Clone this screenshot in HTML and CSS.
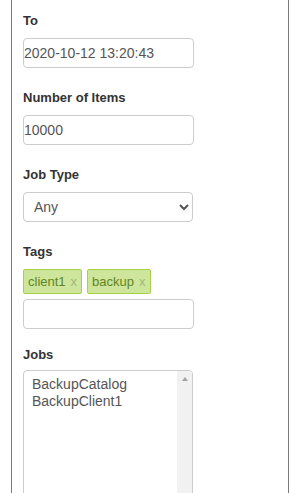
FILE: index.html
```html
<!DOCTYPE html>
<html lang="en">
<head>
  <meta charset="UTF-8">
  <meta name="viewport" content="width=device-width, initial-scale=1.0">
  <title>Job filter</title>
  <link rel="stylesheet" href="styles.css">
</head>
<body>
  <div class="panel">
    <div class="field">
      <label for="to">To</label>
      <input class="input" id="to" type="text" value="2020-10-12 13:20:43">
    </div>

    <div class="field">
      <label for="limit">Number of Items</label>
      <input class="input" id="limit" type="text" value="10000">
    </div>

    <div class="field">
      <label for="jobtype">Job Type</label>
      <select class="select" id="jobtype">
        <option>Any</option>
        <option>Backup</option>
        <option>Restore</option>
      </select>
    </div>

    <div class="field field-tags">
      <label for="tags">Tags</label>
      <div class="tags">
        <span class="tag">client1<a href="#" class="tag-remove">x</a></span>
        <span class="tag">backup<a href="#" class="tag-remove">x</a></span>
      </div>
      <input class="input" id="tags" type="text">
    </div>

    <div class="field field-jobs">
      <label>Jobs</label>
      <div class="list">
        <div class="list-options" role="listbox" aria-multiselectable="true">
          <div class="list-item" role="option">BackupCatalog</div>
          <div class="list-item" role="option">BackupClient1</div>
        </div>
        <div class="list-track"><span class="list-arrow"></span></div>
      </div>
    </div>
  </div>
</body>
</html>
```

FILE: styles.css
```css
:root {
  --text: #333333;
  --muted: #555555;
  --line: #cccccc;
  --panel-line: #7a7a7a;
  --font-sans: 'Liberation Sans', Arial, sans-serif;
}

body {
  background: #ffffff;
  color: var(--text);
  font-family: var(--font-sans);
  margin: 0;
}

.panel {
  margin: -1px 11px 0;
  padding: 11px 11px 0;
  border: 1px solid var(--panel-line);
  min-height: 520px;
}

.field {
  margin-bottom: 20px;
}

.field label {
  display: block;
  font-size: 13px;
  font-weight: bold;
  line-height: 20px;
  margin-bottom: 7px;
}

.input,
.select,
.list {
  display: block;
  box-sizing: border-box;
  border: 1px solid var(--line);
  border-radius: 4px;
  background: #ffffff;
  color: var(--muted);
  font-family: var(--font-sans);
  font-size: 14px;
  margin: 0;
}

.input {
  width: 171px;
  height: 30px;
  padding: 0;
}

.select {
  width: 170px;
  height: 30px;
  padding: 0 6px;
}

.tags {
  display: flex;
  gap: 5px;
  margin-bottom: 5px;
}

.tag {
  display: inline-block;
  border: 1px solid #a5d24a;
  border-radius: 2px;
  background: #cde69c;
  color: #638421;
  font-size: 13px;
  line-height: 15px;
  padding: 4px;
}

.tag-remove {
  color: #9db97a;
  text-decoration: none;
  margin-left: 5px;
}

.field-tags {
  margin-bottom: 16px;
}

.field-jobs label {
  margin-bottom: 5px;
}

.list {
  display: flex;
  width: 170px;
  height: 140px;
  overflow: hidden;
}

.list-options {
  flex: 1;
  padding: 5px 0 5px 8px;
}

.list-item {
  line-height: 17px;
}

.list-track {
  width: 15px;
  background: #f1f1f1;
  display: flex;
  justify-content: center;
  padding-top: 6px;
  box-sizing: border-box;
}

.list-arrow {
  width: 0;
  height: 0;
  border-left: 3.5px solid transparent;
  border-right: 3.5px solid transparent;
  border-bottom: 4px solid #a3a3a3;
}
```
